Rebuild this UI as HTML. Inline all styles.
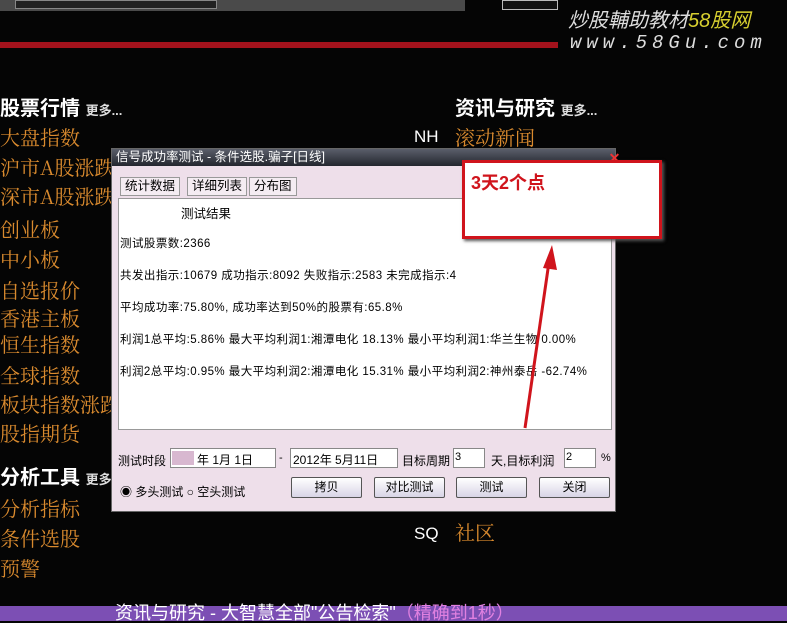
<!DOCTYPE html>
<html><head><meta charset="utf-8"><style>
*{margin:0;padding:0;box-sizing:border-box}
body{width:787px;height:621px;background:#050505;position:relative;overflow:hidden;font-family:"Liberation Sans","Noto Sans CJK SC",sans-serif}
.a{position:absolute;white-space:nowrap}
.o{color:#d98a2e;font-size:20px;font-family:"Noto Serif CJK SC","Noto Sans CJK SC",serif;line-height:22px}
.h{color:#fff;font-size:20px;font-weight:bold;line-height:22px}
.m{color:#ddd;font-size:13px}
.dlg{left:111px;top:148px;width:505px;height:364px;background:#eedfea;border:1px solid #666}
.tt{left:0;top:0;width:503px;height:17px;background:linear-gradient(#5a5e6a,#23262e);color:#fff;font-size:12.5px;line-height:17px;padding-left:4px}
.s{font-size:11px;color:#000;font-family:"Liberation Sans","Noto Sans CJK SC",sans-serif}
.r{font-size:11.5px;letter-spacing:0.45px}
.tab{top:28px;height:19px;border:1px solid #999;background:#f4ecf2;font-size:12.5px;line-height:17px;padding:0 4px}
.inp{background:#fff;border:1px solid #888;height:20px}
.btn{top:328px;width:71px;height:21px;border:1px solid #555;border-radius:2px;background:linear-gradient(#fff,#d8d4e6);font-size:12px;text-align:center;line-height:19px}
</style></head><body>
<div class="a" style="left:0;top:0;width:465px;height:11px;background:#4a4a4a"></div>
<div class="a" style="left:15px;top:0;width:202px;height:9px;background:#222;border:1px solid #888"></div>
<div class="a" style="left:502px;top:0;width:56px;height:10px;background:#111;border:1px solid #bbb"></div>
<div class="a" style="left:0;top:42px;width:558px;height:6px;background:#a3121c"></div>
<div class="a" style="left:568px;top:4px;font-size:20px;color:#ddd;font-style:italic">炒股輔助教材<span style="color:#d8d030">58股网</span></div>
<div class="a" style="left:570px;top:32px;font-size:19px;color:#ddd;font-style:italic;letter-spacing:5px;font-family:'Liberation Mono',monospace">www.58Gu.com</div>

<div class="a h" style="left:0;top:98px">股票行情 <span class="m">更多...</span></div>
<div class="a o" style="left:0;top:126px">大盘指数</div>
<div class="a o" style="left:0;top:156px">沪市A股涨跌</div>
<div class="a o" style="left:0;top:185px">深市A股涨跌</div>
<div class="a o" style="left:0;top:218px">创业板</div>
<div class="a o" style="left:0;top:248px">中小板</div>
<div class="a o" style="left:0;top:279px">自选报价</div>
<div class="a o" style="left:0;top:307px">香港主板</div>
<div class="a o" style="left:0;top:333px">恒生指数</div>
<div class="a o" style="left:0;top:364px">全球指数</div>
<div class="a o" style="left:0;top:393px">板块指数涨跌</div>
<div class="a o" style="left:0;top:422px">股指期货</div>
<div class="a h" style="left:0;top:467px">分析工具 <span class="m">更多</span></div>
<div class="a o" style="left:0;top:497px">分析指标</div>
<div class="a o" style="left:0;top:527px">条件选股</div>
<div class="a o" style="left:0;top:557px">预警</div>
<div class="a h" style="left:455px;top:98px">资讯与研究 <span class="m">更多...</span></div>
<div class="a" style="left:414px;top:127px;color:#fff;font-size:17px">NH</div>
<div class="a o" style="left:455px;top:126px">滚动新闻</div>
<div class="a" style="left:414px;top:524px;color:#fff;font-size:17px">SQ</div>
<div class="a o" style="left:455px;top:521px">社区</div>

<div class="a dlg">
<div class="a tt">信号成功率测试 - 条件选股.骗子[日线]</div>
<div class="a" style="left:485px;top:1px;color:#e33;font-size:14px;font-weight:bold">_ ✕</div>
<div class="a tab" style="left:8px">统计数据</div>
<div class="a tab" style="left:75px">详细列表</div>
<div class="a tab" style="left:137px">分布图</div>
<div class="a" style="left:6px;top:49px;width:494px;height:232px;background:#fff;border:1px solid #999"></div>
<div class="a s" style="left:69px;top:54px;font-size:12.5px">测试结果</div>
<div class="a s r" style="left:8px;top:86px">测试股票数:2366</div>
<div class="a s r" style="left:8px;top:118px">共发出指示:10679 成功指示:8092 失败指示:2583 未完成指示:4</div>
<div class="a s r" style="left:8px;top:150px">平均成功率:75.80%, 成功率达到50%的股票有:65.8%</div>
<div class="a s r" style="left:8px;top:182px">利润1总平均:5.86% 最大平均利润1:湘潭电化 18.13% 最小平均利润1:华兰生物 0.00%</div>
<div class="a s r" style="left:8px;top:214px">利润2总平均:0.95% 最大平均利润2:湘潭电化 15.31% 最小平均利润2:神州泰岳 -62.74%</div>
<div class="a s" style="left:6px;top:303px;font-size:12px">测试时段</div>
<div class="a inp" style="left:58px;top:299px;width:106px"></div>
<div class="a" style="left:60px;top:302px;width:22px;height:14px;background:#d8b8d0"></div>
<div class="a s" style="left:85px;top:302px;font-size:12px">年 1月 1日</div>
<div class="a s" style="left:167px;top:303px">-</div>
<div class="a inp" style="left:178px;top:299px;width:108px"></div>
<div class="a s" style="left:181px;top:302px;font-size:12px">2012年 5月11日</div>
<div class="a s" style="left:290px;top:303px;font-size:12px">目标周期</div>
<div class="a inp" style="left:341px;top:299px;width:32px"></div>
<div class="a s" style="left:343px;top:302px">3</div>
<div class="a s" style="left:379px;top:303px;font-size:12px">天,目标利润</div>
<div class="a inp" style="left:452px;top:299px;width:32px"></div>
<div class="a s" style="left:454px;top:302px">2</div>
<div class="a s" style="left:489px;top:303px">%</div>
<div class="a s" style="left:8px;top:334px;font-size:12px">◉ 多头测试 ○ 空头测试</div>
<div class="a btn" style="left:179px">拷贝</div>
<div class="a btn" style="left:262px">对比测试</div>
<div class="a btn" style="left:344px">测试</div>
<div class="a btn" style="left:427px">关闭</div>
</div>

<div class="a" style="left:462px;top:160px;width:200px;height:79px;background:#fff;border:3px solid #d0141c;box-shadow:2px 2px 3px #555"></div>
<div class="a" style="left:471px;top:169px;color:#d0141c;font-size:18px;font-weight:bold">3天2个点</div>
<svg class="a" style="left:0;top:0" width="787" height="621"><line x1="525" y1="428" x2="549" y2="262" stroke="#d0141c" stroke-width="3"/><polygon points="552,245 543,268 557,270" fill="#d0141c"/></svg>

<div class="a" style="left:0;top:606px;width:787px;height:15px;background:#7c4fb4"></div>
<div class="a" style="left:115px;top:603px;color:#fff;font-size:18px;line-height:20px">资讯与研究 - 大智慧全部"公告检索"<span style="color:#e080e0">（精确到1秒）</span></div>
</body></html>
